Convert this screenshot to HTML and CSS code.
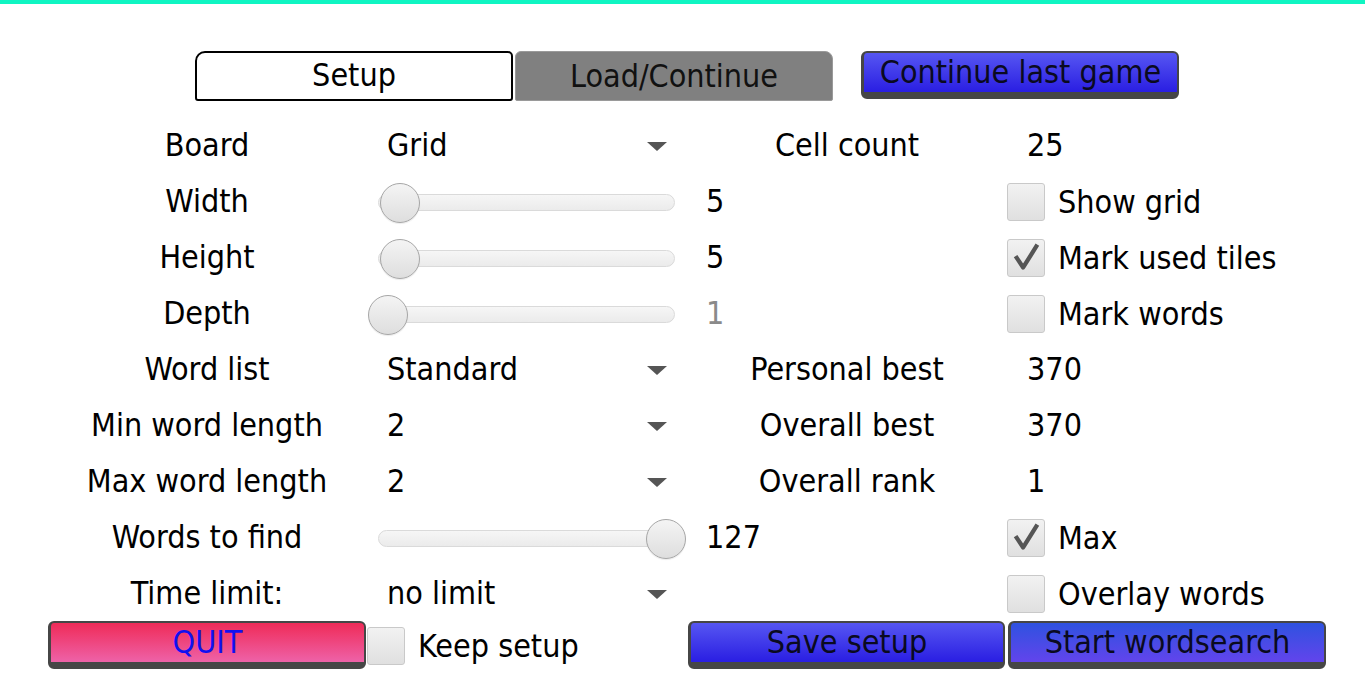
FILE: index.html
```html
<html>
    <head>
        <link rel="stylesheet" href="styles.css">
    </head>
    <body>
        <div class="topbar"></div>

        <div class="tabs">
            <div class="tab tab-active">Setup</div>
            <div class="tab tab-off">Load/Continue</div>
            <div class="btn btn-blue btn-continue">Continue last game</div>
        </div>

        <div class="setup">
            <!-- row 1 -->
            <div class="label">Board</div>
            <div class="combo"><span>Grid</span><span class="arrow"></span></div>
            <div class="value"></div>
            <div class="label">Cell count</div>
            <div class="info">25</div>

            <!-- row 2 -->
            <div class="label">Width</div>
            <div class="slider"><div class="track"><div class="thumb" style="left: 1px"></div></div></div>
            <div class="value">5</div>
            <div class="label"></div>
            <div class="check"><span class="box"></span>Show grid</div>

            <!-- row 3 -->
            <div class="label">Height</div>
            <div class="slider"><div class="track"><div class="thumb" style="left: 1px"></div></div></div>
            <div class="value">5</div>
            <div class="label"></div>
            <div class="check"><span class="box"><svg viewBox="0 0 38 38"><path d="M8 17 L16 29 L31 5" /></svg></span>Mark used tiles</div>

            <!-- row 4 -->
            <div class="label">Depth</div>
            <div class="slider"><div class="track"><div class="thumb" style="left: -11px"></div></div></div>
            <div class="value disabled">1</div>
            <div class="label"></div>
            <div class="check"><span class="box"></span>Mark words</div>

            <!-- row 5 -->
            <div class="label">Word list</div>
            <div class="combo"><span>Standard</span><span class="arrow"></span></div>
            <div class="value"></div>
            <div class="label">Personal best</div>
            <div class="info">370</div>

            <!-- row 6 -->
            <div class="label">Min word length</div>
            <div class="combo"><span>2</span><span class="arrow"></span></div>
            <div class="value"></div>
            <div class="label">Overall best</div>
            <div class="info">370</div>

            <!-- row 7 -->
            <div class="label">Max word length</div>
            <div class="combo"><span>2</span><span class="arrow"></span></div>
            <div class="value"></div>
            <div class="label">Overall rank</div>
            <div class="info">1</div>

            <!-- row 8 -->
            <div class="label">Words to find</div>
            <div class="slider"><div class="track"><div class="thumb" style="left: 267px"></div></div></div>
            <div class="value">127</div>
            <div class="label"></div>
            <div class="check"><span class="box"><svg viewBox="0 0 38 38"><path d="M8 17 L16 29 L31 5" /></svg></span>Max</div>

            <!-- row 9 -->
            <div class="label">Time limit:</div>
            <div class="combo"><span>no limit</span><span class="arrow"></span></div>
            <div class="value"></div>
            <div class="label"></div>
            <div class="check"><span class="box"></span>Overlay words</div>
        </div>

        <div class="footer">
            <div class="btn btn-red">QUIT</div>
            <div class="keep"><span class="box"></span>Keep setup</div>
            <div class="btn btn-blue">Save setup</div>
            <div class="btn btn-blue2">Start wordsearch</div>
        </div>
    </body>
</html>
```

FILE: styles.css
```css
body {
    margin: 0;
    background: white;
    font-family: "DejaVu Sans Condensed", "DejaVu Sans", sans-serif;
    font-stretch: condensed;
    font-size: 32px;
    color: black;
    width: 1365px;
    height: 684px;
    overflow: hidden;
}

.topbar {
    height: 4px;
    background: #10f5c2;
}

.tabs {
    display: flex;
    margin-top: 47px;
    padding-left: 195px;
    height: 50px;
}

.tab {
    width: 318px;
    height: 50px;
    box-sizing: border-box;
    display: flex;
    align-items: center;
    justify-content: center;
    padding-bottom: 2px;
}
.tab-active {
    background: white;
    border: 2px solid black;
    border-radius: 10px 5px 3px 3px;
}
.tab-off {
    margin-left: 2px;
    background: #808080;
    border: 1px solid #9a9a9a;
    border-radius: 6px 8px 2px 2px;
    color: #111;
    padding-bottom: 0;
}

.btn {
    height: 48px;
    box-sizing: border-box;
    border: 2px solid #464646;
    border-left-width: 3px;
    border-bottom-width: 7px;
    border-radius: 6px;
    display: flex;
    align-items: center;
    justify-content: center;
    color: #0a0a20;
    padding-bottom: 2px;
}
.btn-continue {
    width: 318px;
    margin-left: 28px;
}
.btn-blue {
    background: linear-gradient(#5656f2, #2a1ee2);
}
.btn-blue2 {
    background: linear-gradient(#2f52e0, #6244ec);
}
.btn-red {
    background: linear-gradient(#ef2b58, #ee62a8);
    color: #1010f0;
}

.setup {
    display: grid;
    grid-template-columns: 334px 316px 70px 174px 1fr;
    grid-auto-rows: 56px;
    margin-top: 17px;
    padding-left: 40px;
}

.label {
    display: flex;
    align-items: center;
    justify-content: center;
    white-space: nowrap;
    padding-bottom: 3px;
}

.combo {
    display: flex;
    align-items: center;
    justify-content: space-between;
    padding-left: 13px;
    padding-right: 23px;
    padding-bottom: 3px;
}
.arrow {
    width: 0;
    height: 0;
    border-left: 10px solid transparent;
    border-right: 10px solid transparent;
    border-top: 9px solid #555;
    margin-top: 3px;
}

.value {
    display: flex;
    align-items: center;
    padding-left: 16px;
    padding-bottom: 3px;
}
.value.disabled {
    color: #8a8a8a;
}

.info {
    display: flex;
    align-items: center;
    padding-left: 93px;
    padding-bottom: 3px;
}

.slider {
    display: flex;
    align-items: center;
    padding-left: 4px;
}
.track {
    position: relative;
    width: 297px;
    height: 17px;
    box-sizing: border-box;
    border: 1px solid #dadada;
    border-radius: 9px;
    background: linear-gradient(#f6f6f6, #ebebeb);
}
.thumb {
    position: absolute;
    top: -12px;
    width: 40px;
    height: 40px;
    box-sizing: border-box;
    border-radius: 50%;
    border: 1.5px solid #a6a6a6;
    background: linear-gradient(#f4f4f4, #dedede);
    box-shadow: 0 1px 1px rgba(0, 0, 0, 0.08);
}

.check {
    display: flex;
    align-items: center;
    padding-left: 73px;
    white-space: nowrap;
}

.box {
    display: inline-block;
    width: 38px;
    height: 38px;
    box-sizing: border-box;
    border: 1px solid #c9c9c9;
    border-radius: 3px;
    background: linear-gradient(#f2f2f2, #e0e0e0);
    margin-right: 13px;
    flex-shrink: 0;
}
.box svg {
    display: block;
    width: 36px;
    height: 36px;
}
.box path {
    fill: none;
    stroke: #555;
    stroke-width: 4.5;
    stroke-linejoin: round;
}

.footer {
    display: flex;
    align-items: flex-start;
    margin-top: -1px;
    padding-left: 48px;
}
.footer .btn-red {
    width: 318px;
}
.keep {
    width: 322px;
    display: flex;
    align-items: center;
    padding-top: 6px;
    padding-left: 1px;
    box-sizing: border-box;
}
.footer .btn-blue {
    width: 317px;
}
.footer .btn-blue2 {
    width: 318px;
    margin-left: 3px;
}
```
